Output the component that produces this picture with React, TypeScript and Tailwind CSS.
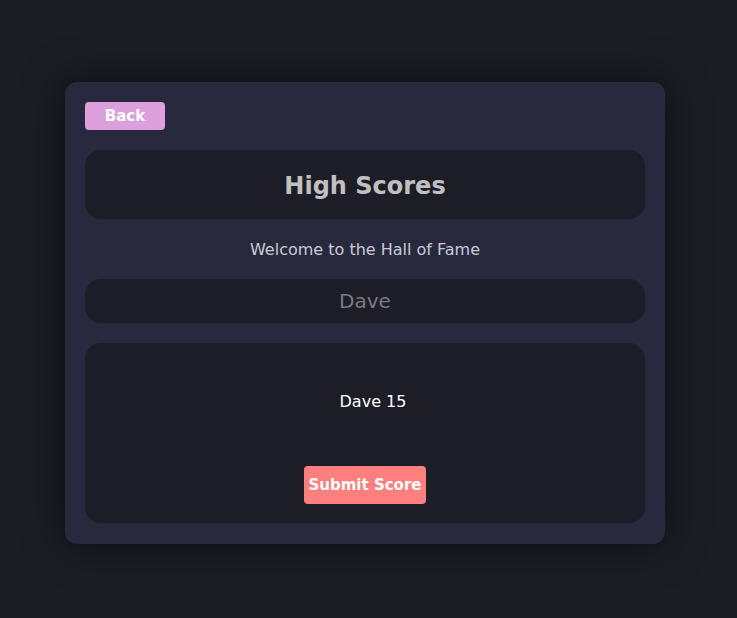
import React, { useState } from 'react';

const App: React.FC = () => {
    const [name, setName] = useState('');

    return (
        <div className="min-h-screen w-full bg-[#1c1c25] pl-[65px] pt-[82px] font-['DejaVu_Sans',sans-serif]">
            <div className="w-[600px] h-[462px] bg-[#29293d] rounded-xl p-5 flex flex-col shadow-[0_0_40px_rgba(0,0,0,0.55)]">
                <div>
                    <button className="w-[80px] h-[28px] pt-px rounded bg-[#dda0dd] text-white text-[15px] font-bold">
                        Back
                    </button>
                </div>

                {/* Title */}
                <div className="mt-5 h-[69px] pt-[3px] rounded-2xl bg-[#1d1d28] flex items-center justify-center">
                    <h1 className="text-2xl font-bold text-[#c0c0c0]">High Scores</h1>
                </div>

                <p className="mt-[19px] h-6 leading-6 text-center text-base text-[#c9c9d6]">Welcome to the Hall of Fame</p>

                <input
                    value={name}
                    onChange={e => setName(e.target.value)}
                    placeholder="Dave"
                    className="mt-[17px] h-[44px] w-full rounded-2xl bg-[#1d1d28] text-center text-xl text-[#c0c0c0] placeholder:text-[#7a7a80] outline-none"
                />

                {/* Scores */}
                <div className="mt-5 h-[180px] rounded-2xl bg-[#1d1d28] flex flex-col items-center">
                    <div className="mt-[47px] h-6 pl-4 leading-6 text-base text-white">Dave 15</div>
                    <button className="mt-[52px] h-[38px] px-[5px] pt-px rounded bg-[#ff7f7f] text-white text-[15px] font-bold">
                        Submit Score
                    </button>
                </div>
            </div>
        </div>
    );
};

export default App;
